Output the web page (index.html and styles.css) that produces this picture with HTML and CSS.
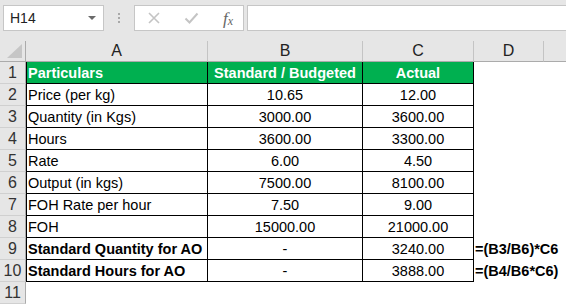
FILE: index.html
```html
<!DOCTYPE html>
<html>
<head>
<meta charset="utf-8">
<link rel="stylesheet" href="styles.css">
</head>
<body>
<div class="toolbar">
  <div class="namebox">
    <span class="name">H14</span>
    <svg class="dd" width="8" height="4" viewBox="0 0 8 4"><polygon points="0,0 8,0 4,4" fill="#6a6a6a"/></svg>
  </div>
  <div class="grip"><i></i><i></i><i></i></div>
  <div class="fxbox">
    <svg class="ic" width="14" height="12" viewBox="0 0 14 12"><path d="M2 1 L12 11 M12 1 L2 11" stroke="#c4c4c4" stroke-width="1.6" fill="none"/></svg>
    <svg class="ic" width="15" height="12" viewBox="0 0 15 12"><path d="M1.5 6.5 L5.5 10.5 L13.5 1.5" stroke="#c4c4c4" stroke-width="2" fill="none"/></svg>
    <span class="fx">f<sub>x</sub></span>
  </div>
  <div class="input"></div>
</div>
<div class="sheet">
  <div class="ch corner"><svg width="16" height="15" viewBox="0 0 16 15"><polygon points="15,0 15,14 0,14" fill="#c6c6c6"/></svg></div>
  <div class="ch">A</div><div class="ch">B</div><div class="ch">C</div><div class="ch">D</div><div class="ch last"></div>

  <div class="rh">1</div><div class="c a hd">Particulars</div><div class="c hd ctr">Standard / Budgeted</div><div class="c hd ctr">Actual</div><div class="e"></div><div class="e"></div>
  <div class="rh">2</div><div class="c a">Price (per kg)</div><div class="c ctr">10.65</div><div class="c ctr">12.00</div><div class="e"></div><div class="e"></div>
  <div class="rh">3</div><div class="c a">Quantity (in Kgs)</div><div class="c ctr">3000.00</div><div class="c ctr">3600.00</div><div class="e"></div><div class="e"></div>
  <div class="rh">4</div><div class="c a">Hours</div><div class="c ctr">3600.00</div><div class="c ctr">3300.00</div><div class="e"></div><div class="e"></div>
  <div class="rh">5</div><div class="c a">Rate</div><div class="c ctr">6.00</div><div class="c ctr">4.50</div><div class="e"></div><div class="e"></div>
  <div class="rh">6</div><div class="c a">Output (in kgs)</div><div class="c ctr">7500.00</div><div class="c ctr">8100.00</div><div class="e"></div><div class="e"></div>
  <div class="rh">7</div><div class="c a">FOH Rate per hour</div><div class="c ctr">7.50</div><div class="c ctr">9.00</div><div class="e"></div><div class="e"></div>
  <div class="rh">8</div><div class="c a">FOH</div><div class="c ctr">15000.00</div><div class="c ctr">21000.00</div><div class="e"></div><div class="e"></div>
  <div class="rh">9</div><div class="c a b">Standard Quantity for AO</div><div class="c ctr">-</div><div class="c ctr">3240.00</div><div class="e f">=(B3/B6)*C6</div><div class="e"></div>
  <div class="rh">10</div><div class="c a b">Standard Hours for AO</div><div class="c ctr">-</div><div class="c ctr">3888.00</div><div class="e f">=(B4/B6*C6)</div><div class="e"></div>
  <div class="rh">11</div><div class="e"></div><div class="e"></div><div class="e"></div><div class="e"></div><div class="e"></div>
</div>
</body>
</html>
```

FILE: styles.css
```css
* { box-sizing: border-box; }
html, body { margin: 0; padding: 0; }
body {
  width: 566px;
  height: 304px;
  overflow: hidden;
  background: #e6e6e6;
  font-family: "Liberation Sans", Arial, sans-serif;
}
.toolbar {
  height: 41px;
  display: flex;
  align-items: flex-start;
  padding-top: 5px;
}
.namebox {
  margin-left: 3px;
  width: 101px;
  height: 26px;
  background: #fff;
  border: 1px solid #c6c6c6;
  display: flex;
  align-items: center;
  justify-content: space-between;
  padding: 0 7px 0 6px;
}
.name { font-size: 14px; color: #222; }
.grip {
  width: 30px;
  height: 26px;
  display: flex;
  flex-direction: column;
  align-items: center;
  justify-content: center;
  gap: 2px;
}
.grip i { display: block; width: 2px; height: 2px; background: #a8a8a8; }
.fxbox {
  width: 110px;
  height: 26px;
  background: #fff;
  border: 1px solid #c6c6c6;
  display: flex;
  align-items: center;
  justify-content: space-between;
  padding: 0 10px 0 12px;
}
.fx {
  font-family: "Liberation Serif", "Times New Roman", serif;
  font-style: italic;
  font-size: 17px;
  color: #666;
  line-height: 1;
}
.fx sub { font-size: 12px; vertical-align: -1px; }
.input {
  margin-left: 3px;
  flex: 1;
  height: 26px;
  background: #fff;
  border: 1px solid #c6c6c6;
  border-right: none;
}
.sheet {
  display: grid;
  grid-template-columns: 26px 182px 155px 111px 70px 1fr;
  grid-template-rows: 21px;
  grid-auto-rows: 22px;
  background: #fff;
  font-size: 14.5px;
  color: #000;
}
.ch {
  background: #e6e6e6;
  border-right: 1px solid #c4c4c4;
  border-bottom: 1px solid #ababab;
  text-align: center;
  line-height: 20px;
  font-size: 16px;
  color: #222;
}
.ch.last { border-right: none; }
.corner {
  display: flex;
  align-items: flex-end;
  justify-content: flex-end;
  padding: 0 2px 2px 0;
  border-right: 1px solid #ababab;
}
.corner svg { display: block; }
.rh {
  background: #e6e6e6;
  border-right: 1px solid #ababab;
  border-bottom: 1px solid #d0d0d0;
  text-align: center;
  line-height: 22px;
  color: #333;
  font-size: 16px;
}
.c {
  border-right: 1px solid #000;
  border-bottom: 1px solid #000;
  line-height: 20px;
  padding-top: 1px;
  white-space: nowrap;
  overflow: hidden;
}
.c.a { border-left: 1px solid #000; padding-left: 1px; }
.ctr { text-align: center; }
.b { font-weight: bold; }
.hd { background: #00b050; color: #fff; font-weight: bold; }
.e {
  line-height: 20px;
  padding-top: 1px;
  white-space: nowrap;
}
.f { font-weight: bold; padding-left: 1px; }
```
